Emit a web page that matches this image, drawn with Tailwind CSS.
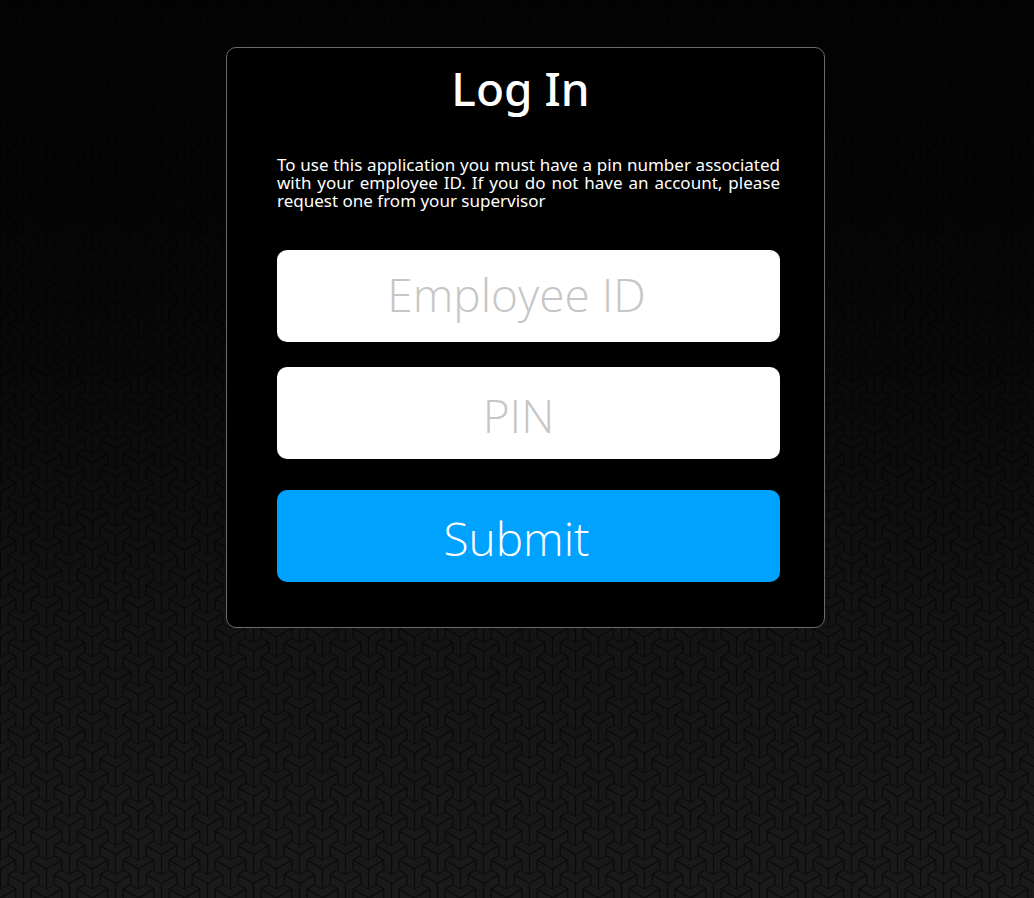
<!DOCTYPE html>
<html lang="en">
<head>
<meta charset="utf-8">
<meta name="viewport" content="width=device-width, initial-scale=1">
<title>Log In</title>
<script src="https://cdn.jsdelivr.net/npm/@tailwindcss/browser@4"></script>
</head>
<body class="min-h-screen bg-black font-['Open_Sans','Noto_Sans',sans-serif] text-white">
<!-- Tripod-tile backdrop, fading to black towards the top -->
<svg class="fixed inset-0 -z-10 h-full w-full" aria-hidden="true">
  <defs>
    <g id="tripod" fill="none" stroke="#0b0b0b">
      <path stroke-width="1.3" d="M-15.3-8.9L0 0L15.3-8.9M0 0V20"/>
      <path stroke-width="1" d="M0-8.9L-7.7-13.3L-15.3-8.9V.7L-7.7 5.1V15.7M0-8.9L7.7-13.3L15.3-8.9V.7L7.7 5.1V15.7"/>
    </g>
    <pattern id="tiles" width="46" height="29" patternUnits="userSpaceOnUse">
      <rect width="46" height="29" fill="#1a1a1a"/>
      <use href="#tripod" x="23.5" y="-15.5"/><use href="#tripod" x="23.5" y="13.5"/><use href="#tripod" x="23.5" y="42.5"/>
      <use href="#tripod" x=".5" y="-1"/><use href="#tripod" x=".5" y="28"/>
      <use href="#tripod" x="46.5" y="-1"/><use href="#tripod" x="46.5" y="28"/>
    </pattern>
    <linearGradient id="fade" x1="0" y1="0" x2="0" y2="1">
      <stop offset="0" stop-opacity=".87"/>
      <stop offset=".25" stop-opacity=".8"/>
      <stop offset=".4" stop-opacity=".68"/>
      <stop offset=".7" stop-opacity=".24"/>
      <stop offset="1" stop-opacity="0"/>
    </linearGradient>
  </defs>
  <rect width="100%" height="100%" fill="url(#tiles)"/>
  <rect width="100%" height="100%" fill="url(#fade)"/>
</svg>
<main class="flex justify-center px-4 pt-[47px] pb-12 sm:pl-[33px]">
  <form class="w-full max-w-[599px] rounded-[10px] border border-[#6b6b6b] bg-black pt-2 pr-11 pb-[45px] pl-[50px]">
    <h1 class="pr-4 text-center font-['Noto_Sans'] text-[46px] leading-[64px] font-medium">Log In</h1>
    <p class="mt-9 text-justify font-['Noto_Sans'] text-[17px] leading-[18px]">To use this application you must have a pin number associated with your employee ID. If you do not have an account, please request one from your supervisor</p>
    <input type="text" aria-label="Employee ID" placeholder="Employee ID" class="mt-10 block h-[92px] w-full rounded-[10px] bg-white pr-6 pb-1 text-center text-[46px] font-light text-black placeholder:text-[#c6c6c6]">
    <input type="password" aria-label="PIN" placeholder="PIN" class="mt-[25px] block h-[92px] w-full rounded-[10px] bg-white pt-1 pr-5 text-center text-[46px] font-light text-black placeholder:text-[#c6c6c6]">
    <button type="submit" class="mt-[31px] block h-[92px] w-full rounded-[10px] bg-[#00a2ff] pt-1 pr-6 text-center text-[46px] font-light">Submit</button>
  </form>
</main>
</body>
</html>
